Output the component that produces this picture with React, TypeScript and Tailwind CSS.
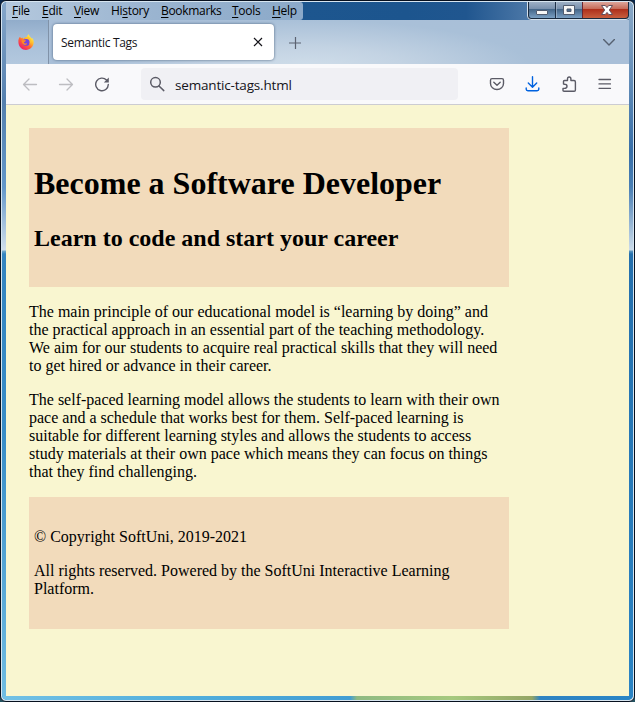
import React from "react";

const ui = "font-['Open_Sans','Noto_Sans',sans-serif]";

const menus: { pre: string; key: string; post: string; width: string }[] = [
  { pre: "", key: "F", post: "ile", width: "w-[30px]" },
  { pre: "", key: "E", post: "dit", width: "w-8" },
  { pre: "", key: "V", post: "iew", width: "w-[37px]" },
  { pre: "Hi", key: "s", post: "tory", width: "w-[50px]" },
  { pre: "", key: "B", post: "ookmarks", width: "w-[71px]" },
  { pre: "", key: "T", post: "ools", width: "w-10" },
  { pre: "", key: "H", post: "elp", width: "w-[31px]" },
];

function MenuBar() {
  return (
    <div className="flex h-[18px] shrink-0 justify-between bg-[linear-gradient(90deg,#205991,#1c558e_400px,#20568f_460px,#4a76a6_520px)]">
      <div className={`${ui} flex h-[18px] w-[297px] rounded-r-[3px] bg-linear-to-r from-[#b4c8dd] via-[#9ab4d0] to-[#8ba9c9] pl-[6px] text-[12px] leading-[18px] tracking-[-0.3px] text-black`}>
        {menus.map((m) => (
          <span key={m.key + m.post} className={`${m.width} shrink-0 whitespace-nowrap`}>
            {m.pre}
            <span className="underline decoration-1 underline-offset-2">{m.key}</span>
            {m.post}
          </span>
        ))}
      </div>
      <WindowButtons />
    </div>
  );
}

function WindowButtons() {
  return (
    <svg className="-mt-px h-5 w-[103px] shrink-0 overflow-visible" viewBox="0 0 103 20">
      <defs>
        <linearGradient id="blueBtn" x1="0" y1="0" x2="0" y2="1">
          <stop offset="0" stopColor="#9cafc5" />
          <stop offset=".43" stopColor="#7890ad" />
          <stop offset=".46" stopColor="#446689" />
          <stop offset="1" stopColor="#7a9fc3" />
        </linearGradient>
        <linearGradient id="redBtn" x1="0" y1="0" x2="0" y2="1">
          <stop offset="0" stopColor="#dda59a" />
          <stop offset=".43" stopColor="#c66a58" />
          <stop offset=".46" stopColor="#ae2f1b" />
          <stop offset="1" stopColor="#c75e3e" />
        </linearGradient>
      </defs>
      <path d="M1.500 0V15Q1.500 18.500 5 18.500H100Q103.500 18.500 103.500 15V0Z" fill="#1a2b40" stroke="#d5e0eb" />
      <path d="M3 1H29V17H5.500Q3 17 3 14Z" fill="url(#blueBtn)" />
      <rect x="30" y="1" width="26" height="16" fill="url(#blueBtn)" />
      <path d="M57 1H102V14Q102 17 99 17H57Z" fill="url(#redBtn)" />
      <path d="M29.500 1V17" stroke="#1d3048" />
      <path d="M30.500 1V17" stroke="#b0c0d2" strokeWidth=".6" />
      <path d="M56.500 1V17" stroke="#6b2530" />
      <rect x="10.500" y="9.500" width="11" height="4" rx=".5" fill="#f6f6f6" stroke="#515c70" />
      <path d="M37.500 4.500H48.500V13.500H37.500ZM41 8V10.500H45V8Z" fill="#f6f6f6" fillRule="evenodd" stroke="#515c70" />
      <path d="M75.500 4.500H79.300L81 6.600L82.700 4.500H86.500L83.300 9L86.500 13.500H82.700L81 11.400L79.300 13.500H75.500L78.700 9Z" fill="#fff" stroke="#634e5b" />
    </svg>
  );
}

function Firefox() {
  return (
    <svg className="ml-[12px] h-4 w-4" viewBox="0 0 16 16">
      <defs>
        <linearGradient id="flame" x1=".85" y1=".1" x2=".2" y2=".9">
          <stop offset="0" stopColor="#fff44f" />
          <stop offset=".35" stopColor="#ffb52b" />
          <stop offset=".6" stopColor="#ff6434" />
          <stop offset="1" stopColor="#ef2069" />
        </linearGradient>
      </defs>
      <path d="M.4 8.200C.2 5.500 1.100 3.500 2 2.700L3 4.200L4.300 3.500L5.300 4.700C6.600 2.700 8.200 3.100 8.900 2.900C9.200 1.700 10 .8 10.700.3C11 2.300 13.100 3.300 13.500 4.500L14.200 4C15.200 5.300 15.800 6.600 15.700 8.500C15.500 12.700 12 15.900 8 15.900S.7 12.800.4 8.200Z" fill="url(#flame)" />
      <circle cx="8.200" cy="8.400" r="3.400" fill="#7543df" />
      <path d="M3.600 6.100L7.600 6.300Q8.500 6.600 7 7.700L5.800 8.200Q6.100 9.600 7.700 9.400C8.700 9.100 9.500 9.700 8.400 10.500C6 11.800 3.400 9.600 3.600 6.100Z" fill="#ff8b22" />
      <path d="M8.600 4.500C11.500 4.100 13 7.100 11.300 10C15 7.500 12.200 3.200 9.400 3Z" fill="#ffc42c" />
    </svg>
  );
}

function TabStrip() {
  return (
    <div className="flex h-11 shrink-0 items-center bg-[radial-gradient(ellipse_280px_60px_at_300px_48px,#d0deea_0%,#c3d3e3_35%,#a9c0d8_80%,#a9bfd8_100%)]">
      <div className="flex h-11 w-[43px] shrink-0 items-center border-r border-[#8092a8] bg-linear-to-b from-[#91acca] via-[#a9c0d9] to-[#b3c8de]">
        <Firefox />
      </div>
      <div className="ml-1 flex h-9 w-[221px] items-center justify-between rounded bg-white pr-[11px] pl-2 shadow-[0_0_3px_#4d6580]">
        <span className={`${ui} mt-px text-[12px] leading-5 tracking-[-0.3px] text-[#15141a]`}>Semantic Tags</span>
        <svg className="h-[10px] w-[10px]" viewBox="0 0 10 10" fill="none" stroke="#15141a" strokeWidth="1.200">
          <path d="M1 1L9 9M9 1L1 9" />
        </svg>
      </div>
      <svg className="mt-px ml-[15px] h-3 w-3" viewBox="0 0 12 12" fill="none" stroke="#5b6270" strokeWidth="1.200">
        <path d="M0 6H12M6.500 0V12" />
      </svg>
      <svg className="mr-[14px] ml-auto h-[7px] w-3" viewBox="0 0 12 7" fill="none" stroke="#566171" strokeWidth="1.400" strokeLinecap="round" strokeLinejoin="round">
        <path d="M.6.600L6 6L11.400.6" />
      </svg>
    </div>
  );
}

function Toolbar() {
  return (
    <div className="flex h-[41px] shrink-0 items-center border-b border-[#ccccd2] bg-[#f9f9fb]">
      <svg className="ml-4 h-4 w-4" viewBox="0 0 16 16" fill="none" stroke="#bdbdc1" strokeWidth="1.300" strokeLinecap="round" strokeLinejoin="round">
        <path d="M14.500 8.500H1.500M7 3L1.500 8.500L7 14" />
      </svg>
      <svg className="ml-5 h-4 w-4" viewBox="0 0 16 16" fill="none" stroke="#bdbdc1" strokeWidth="1.300" strokeLinecap="round" strokeLinejoin="round">
        <path d="M1.500 8.500H14.500M9 3L14.500 8.500L9 14" />
      </svg>
      <svg className="ml-5 h-4 w-4" viewBox="0 0 16 16" fill="none" stroke="#5b5b66" strokeWidth="1.400" strokeLinecap="round">
        <path d="M12.500 4A6.300 6.300 0 1 0 14.300 8.500" />
        <path d="M14.800 1.500V6.500H9.800Z" fill="#5b5b66" stroke="none" />
      </svg>
      <div className="ml-[31px] flex h-8 w-[317px] items-center rounded bg-[#f0f0f4] pl-2">
        <svg className="h-4 w-4" viewBox="0 0 16 16" fill="none" stroke="#5b5b66" strokeWidth="1.500" strokeLinecap="round">
          <circle cx="6.500" cy="6.300" r="4.800" />
          <path d="M10 10L14.800 14.600" />
        </svg>
        <span className={`${ui} mt-[2px] ml-[10px] text-[13.5px] leading-5 tracking-[-0.18px] whitespace-nowrap text-[#15141a]`}>semantic-tags.html</span>
      </div>
      <svg className="ml-[31px] h-4 w-4" viewBox="0 0 16 16" fill="none" stroke="#5b5b66" strokeWidth="1.400" strokeLinecap="round" strokeLinejoin="round">
        <path d="M3 2.600H13Q14.500 2.600 14.500 4.200V7.500A6.500 6 0 0 1 1.500 7.500V4.200Q1.500 2.600 3 2.600Z" />
        <path d="M4.800 6.300L8 9.300L11.200 6.300" />
      </svg>
      <svg className="ml-5 h-4 w-4" viewBox="0 0 16 16" fill="none" stroke="#0062df" strokeWidth="1.400" strokeLinecap="round" strokeLinejoin="round">
        <path d="M7.500.7V11M3.300 7L7.500 11.200L11.700 7M1.200 12V13.300Q1.200 14.700 2.900 14.700H12.100Q13.800 14.700 13.800 13.300V12" />
      </svg>
      <svg className="ml-5 h-4 w-4" viewBox="0 0 16 16" fill="none" stroke="#5b5b66" strokeWidth="1.400" strokeLinejoin="round">
        <path d="M2.500 8V5.500Q2.500 4.500 3.500 4.500H6.500V3Q6.500 1 8.200 1T9.900 3V4.500H13Q14.400 4.500 14.400 5.900V14Q14.400 15.200 13.200 15.200H3Q2 15.200 2 14.200V12.400H3.500Q6 12.400 6 10.300T3.700 8.200Z" />
      </svg>
      <svg className="ml-5 h-4 w-4" viewBox="0 0 16 16" fill="none" stroke="#5b5b66" strokeWidth="1.300" strokeLinecap="round">
        <path d="M2 3.500H13.500M2 7.900H13.500M2 12.300H13.500" />
      </svg>
    </div>
  );
}

function Page() {
  return (
    <main className="flex-1 bg-[#f9f6d0] pt-[23px] pl-[23px] font-['Liberation_Serif','Times_New_Roman',serif] text-[16px] leading-[18px] text-black">
      <div className="w-[480px]">
        <header className="h-[159px] bg-[#f2dbbb] px-[5px] pt-[37px]">
          <h1 className="text-[32px] leading-9 font-bold whitespace-nowrap">Become a Software Developer</h1>
          <h2 className="mt-6 text-[24px] leading-[26px] font-bold whitespace-nowrap">Learn to code and start your career</h2>
        </header>
        <p className="my-4 whitespace-nowrap">
          The main principle of our educational model is “learning by doing” and<br />
          the practical approach in an essential part of the teaching methodology.<br />
          We aim for our students to acquire real practical skills that they will need<br />
          to get hired or advance in their career.
        </p>
        <p className="my-4 whitespace-nowrap">
          The self-paced learning model allows the students to learn with their own<br />
          pace and a schedule that works best for them. Self-paced learning is<br />
          suitable for different learning styles and allows the students to access<br />
          study materials at their own pace which means they can focus on things<br />
          that they find challenging.
        </p>
        <footer className="h-[132px] bg-[#f2dbbb] px-[5px] pt-[31px]">
          <p>© Copyright SoftUni, 2019-2021</p>
          <p className="mt-4">
            All rights reserved. Powered by the SoftUni Interactive Learning<br />Platform.
          </p>
        </footer>
      </div>
    </main>
  );
}

export default function App() {
  return (
    <div className="h-[702px] w-[635px] bg-linear-to-b from-[#08264b] to-[#255361]">
      <div className="h-full w-full rounded-[6px] border border-[#07101e] bg-[#d7e5f0] p-px">
        <div className="flex h-[698px] w-[631px] flex-col overflow-hidden rounded-[5px] bg-[#348bc6]">
          <div className="flex h-[694px]">
            <div className="w-1 shrink-0 bg-[linear-gradient(#86a7ca_0,#547fae_100px,#6397c9_185px,#d0deeb_248px,#73a9cb_249px,#3484c0_252px,#388cc7_430px,#70bce2_694px)]" />
            <div className="flex w-[623px] flex-col">
              <MenuBar />
              <TabStrip />
              <Toolbar />
              <Page />
            </div>
            <div className="w-1 shrink-0 bg-[linear-gradient(#8aa8c6_0,#6d94bc_60px,#386fa8_150px,#4a7fb4_185px,#ccdcea_248px,#5e99c1_249px,#2570ad_252px,#2b84c4_694px)]" />
          </div>
          <div className="h-1 bg-[linear-gradient(90deg,#73c1e5_0,#52afdc_180px,#429dd3_348px,#8fba82_355px,#a6c97e_450px,#94a565_530px,#2f83c2_538px,#2985c6_100%)]" />
        </div>
      </div>
    </div>
  );
}
